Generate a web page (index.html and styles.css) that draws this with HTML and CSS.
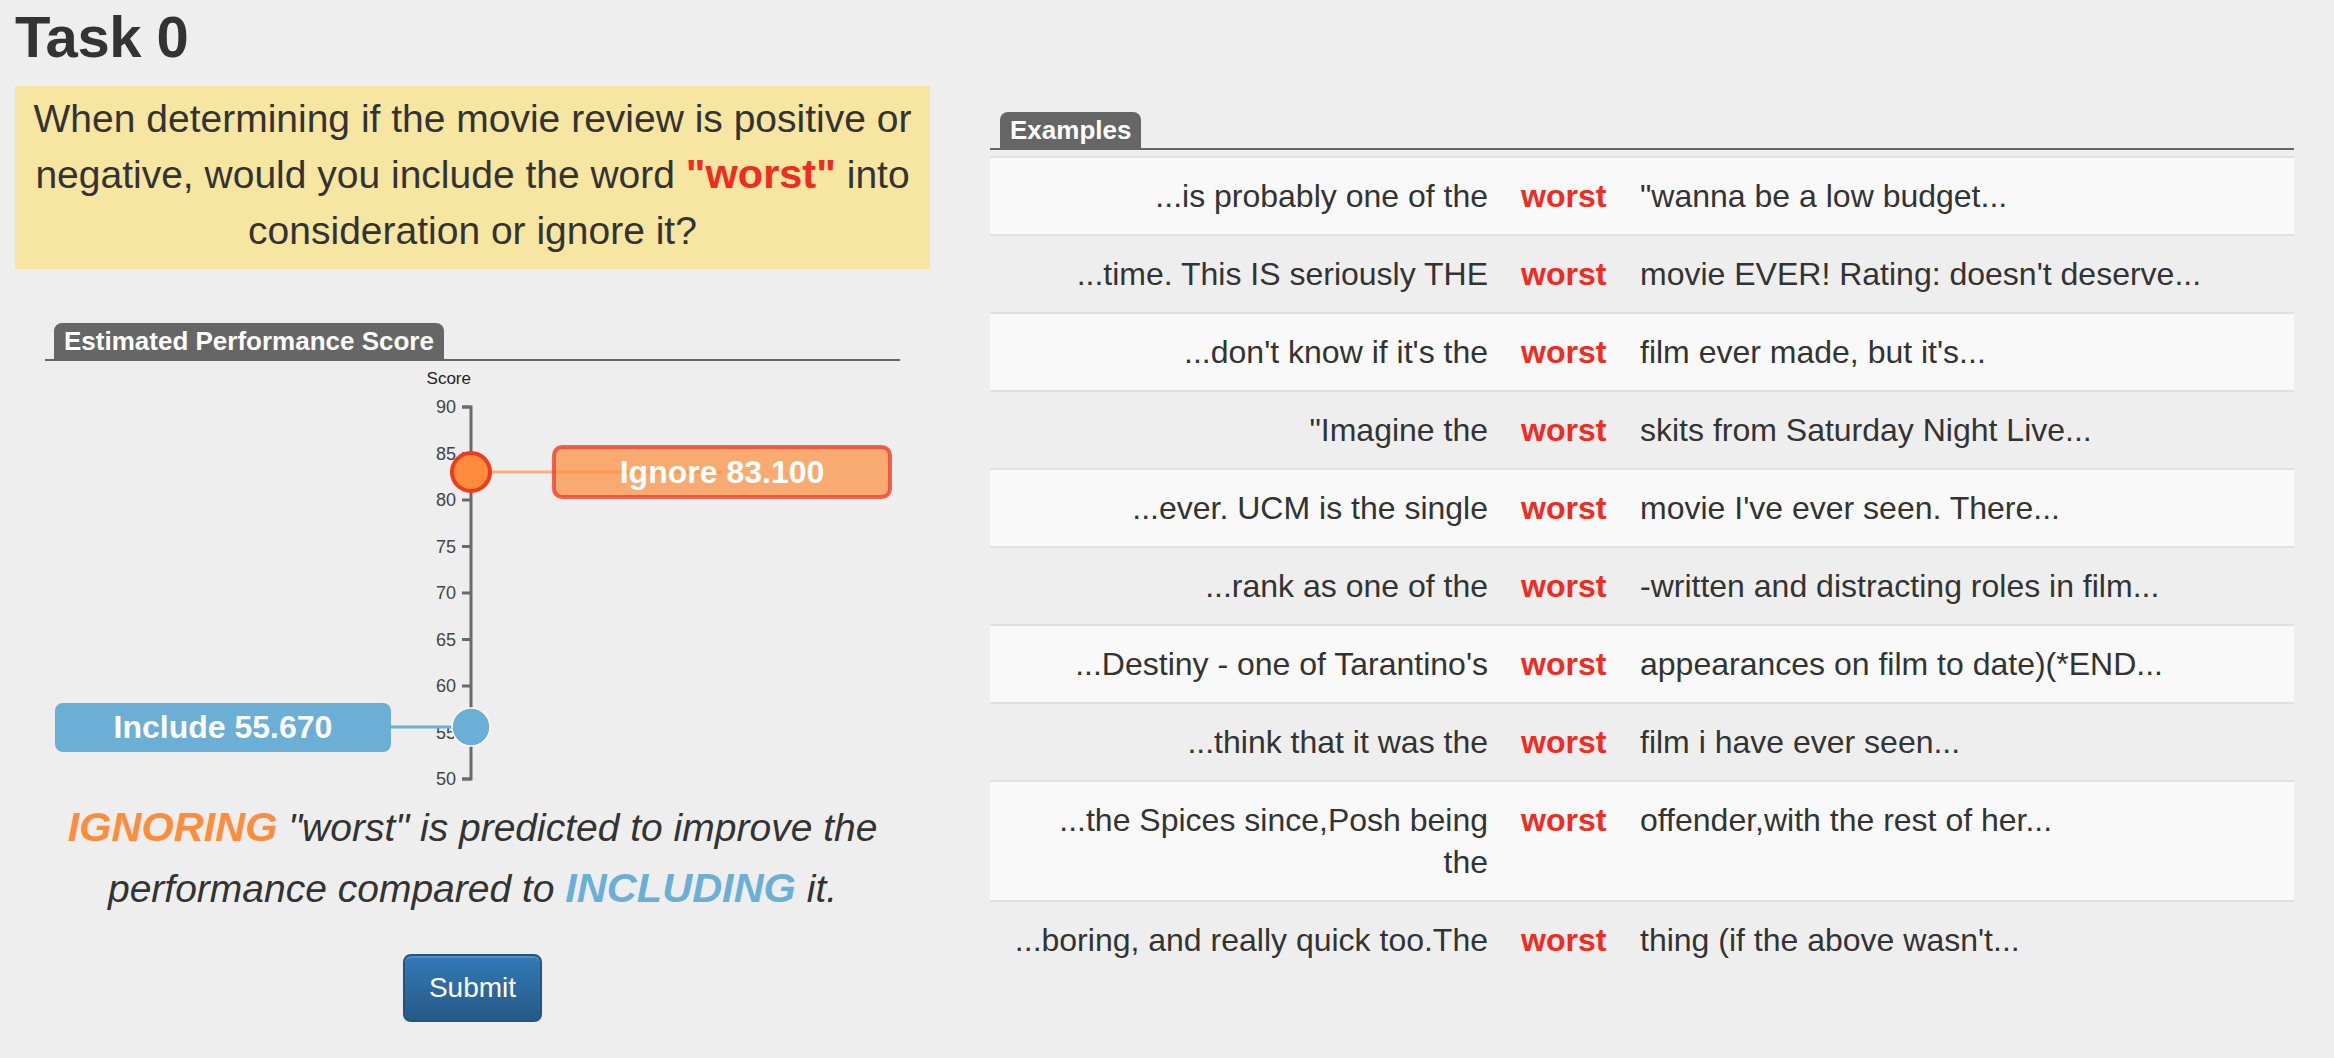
FILE: index.html
```html
<!DOCTYPE html>
<html lang="en">
<head>
<meta charset="utf-8">
<title>Task 0</title>
<link rel="stylesheet" href="styles.css">
</head>
<body>
<div class="page">
  <div class="left">
    <h1 class="title">Task 0</h1>
    <div class="question">
      <p>When determining if the movie review is positive or negative, would you include the word <b class="hl">"worst"</b> into consideration or ignore it?</p>
    </div>
    <div class="panel chart-panel">
      <div class="tabbar"><span class="tab">Estimated Performance Score</span></div>
      <svg class="chart" width="855" height="436" viewBox="0 0 855 436" xmlns="http://www.w3.org/2000/svg">
        <text class="axis-title" x="426" y="23" text-anchor="end">Score</text>
        <g class="axis">
          <path class="domain" d="M417,46H426V418H417"/>
          <line x1="417" y1="46" x2="426" y2="46"/><text x="411" y="52">90</text>
          <line x1="417" y1="92.5" x2="426" y2="92.5"/><text x="411" y="98.5">85</text>
          <line x1="417" y1="139" x2="426" y2="139"/><text x="411" y="145">80</text>
          <line x1="417" y1="185.5" x2="426" y2="185.5"/><text x="411" y="191.5">75</text>
          <line x1="417" y1="232" x2="426" y2="232"/><text x="411" y="238">70</text>
          <line x1="417" y1="278.5" x2="426" y2="278.5"/><text x="411" y="284.5">65</text>
          <line x1="417" y1="325" x2="426" y2="325"/><text x="411" y="331">60</text>
          <line x1="417" y1="371.5" x2="426" y2="371.5"/><text x="411" y="377.5">55</text>
          <line x1="417" y1="418" x2="426" y2="418"/><text x="411" y="424">50</text>
        </g>
        <g class="ignore">
          <line class="link" x1="426" y1="111" x2="677" y2="111"/>
          <rect class="box" x="509" y="86" width="336" height="50" rx="8" ry="8"/>
          <circle class="dot" cx="426" cy="111" r="19"/>
          <text class="label" x="677" y="122">Ignore 83.100</text>
        </g>
        <g class="include">
          <line class="link" x1="346" y1="366" x2="426" y2="366"/>
          <rect class="box" x="10" y="342" width="336" height="49" rx="8" ry="8"/>
          <circle class="dot" cx="426" cy="366" r="19"/>
          <text class="label" x="178" y="377">Include 55.670</text>
        </g>
      </svg>
    </div>
    <p class="verdict"><b class="ign">IGNORING</b> "worst" is predicted to improve the performance compared to <b class="inc">INCLUDING</b> it.</p>
    <div class="actions"><button class="btn" type="button">Submit</button></div>
  </div>

  <div class="right">
    <div class="tabbar tabbar-right"><span class="tab">Examples</span></div>
    <table class="examples">
      <tbody>
        <tr><td class="pre">...is probably one of the</td><td class="kw">worst</td><td class="post">"wanna be a low budget...</td></tr>
        <tr><td class="pre">...time. This IS seriously THE</td><td class="kw">worst</td><td class="post">movie EVER! Rating: doesn't deserve...</td></tr>
        <tr><td class="pre">...don't know if it's the</td><td class="kw">worst</td><td class="post">film ever made, but it's...</td></tr>
        <tr><td class="pre">"Imagine the</td><td class="kw">worst</td><td class="post">skits from Saturday Night Live...</td></tr>
        <tr><td class="pre">...ever. UCM is the single</td><td class="kw">worst</td><td class="post">movie I've ever seen. There...</td></tr>
        <tr><td class="pre">...rank as one of the</td><td class="kw">worst</td><td class="post">-written and distracting roles in film...</td></tr>
        <tr><td class="pre">...Destiny - one of Tarantino's</td><td class="kw">worst</td><td class="post">appearances on film to date)(*END...</td></tr>
        <tr><td class="pre">...think that it was the</td><td class="kw">worst</td><td class="post">film i have ever seen...</td></tr>
        <tr><td class="pre">...the Spices since,Posh being the</td><td class="kw">worst</td><td class="post">offender,with the rest of her...</td></tr>
        <tr><td class="pre">...boring, and really quick too.The</td><td class="kw">worst</td><td class="post">thing (if the above wasn't...</td></tr>
      </tbody>
    </table>
  </div>
</div>
</body>
</html>
```

FILE: styles.css
```css
html, body {
  margin: 0;
  padding: 0;
}

body {
  background: #eeeeee;
  color: #333333;
  font-family: "Liberation Sans", Arial, Helvetica, sans-serif;
}

.page {
  display: flex;
  align-items: flex-start;
  gap: 60px;
  padding: 0 40px 0 15px;
}

.left {
  flex: none;
  width: 915px;
}

.right {
  flex: 1;
  min-width: 0;
  margin-top: 112px;
}

.title {
  margin: 5px 0 17px;
  font-size: 58px;
  line-height: 64px;
  font-weight: bold;
  color: #333333;
  letter-spacing: -0.5px;
}

.question {
  background: #f7e5a2;
  padding: 5px 8px 10px;
  text-align: center;
  font-size: 39px;
  line-height: 56px;
  color: #333333;
}

.question p {
  margin: 0;
}

.hl {
  color: #f22a1f;
  font-size: 41.5px;
  line-height: 1;
}

.chart-panel {
  margin: 54px 30px 0;
}

.tabbar {
  display: flex;
  border-bottom: 2px solid #666666;
  padding-left: 9px;
}

.tabbar-right {
  padding-left: 10px;
}

.tab {
  background: #666666;
  color: #ffffff;
  font-weight: bold;
  font-size: 26px;
  line-height: 36px;
  padding: 0 10px;
  border-radius: 8px 8px 0 0;
}

.chart {
  display: block;
  font-family: "Liberation Sans", Arial, Helvetica, sans-serif;
}

.axis-title {
  font-size: 17px;
  fill: #222222;
}

.axis .domain {
  fill: none;
  stroke: #6a6a6a;
  stroke-width: 3;
}

.axis line {
  stroke: #6a6a6a;
  stroke-width: 3;
}

.axis text {
  font-size: 18px;
  fill: #444444;
  text-anchor: end;
}

.ignore .link {
  stroke: #fbae78;
  stroke-width: 3;
}

.ignore .box {
  fill: #fd8d3c;
  fill-opacity: 0.7;
  stroke: #f0402a;
  stroke-opacity: 0.8;
  stroke-width: 4;
}

.ignore .dot {
  fill: #fd8d3c;
  stroke: #f23a1e;
  stroke-width: 4;
}

.include .link {
  stroke: #6baed6;
  stroke-width: 3;
}

.include .box {
  fill: #6baed6;
}

.include .dot {
  fill: #6baed6;
  stroke: #ffffff;
  stroke-width: 1.5;
}

.label {
  fill: #ffffff;
  font-size: 32px;
  font-weight: bold;
  text-anchor: middle;
}

.verdict {
  margin: 0;
  text-align: center;
  font-style: italic;
  font-size: 39px;
  line-height: 61px;
  color: #333333;
}

.ign,
.inc {
  font-size: 41.5px;
  line-height: 1;
}

.ign {
  color: #fd8d3c;
}

.inc {
  color: #6baed6;
}

.actions {
  text-align: center;
  padding-top: 35px;
}

.btn {
  font-family: "Liberation Sans", Arial, Helvetica, sans-serif;
  font-size: 28px;
  line-height: 40px;
  color: #ffffff;
  padding: 12px 24px;
  border: 2px solid #245580;
  border-radius: 8px;
  background: linear-gradient(#337ab7, #265a88);
  box-shadow: inset 0 2px 0 rgba(255, 255, 255, 0.15), 0 2px 2px rgba(0, 0, 0, 0.08);
  cursor: pointer;
}

.examples {
  width: 100%;
  margin-top: 6px;
  border-collapse: collapse;
  table-layout: fixed;
  font-size: 32px;
  line-height: 42px;
  color: #333333;
}

.examples td {
  padding: 17px 16px;
  border-top: 2px solid #e0e0e0;
  vertical-align: top;
  box-sizing: border-box;
}

.examples tr:nth-child(odd) td {
  background: #f9f9f9;
}

.examples .pre {
  width: 514px;
  padding-left: 20px;
  text-align: right;
}

.examples .kw {
  width: 120px;
  padding-left: 17px;
  padding-right: 17px;
  color: #f22a1f;
  font-weight: bold;
}

.examples .post {
  text-align: left;
}
```
